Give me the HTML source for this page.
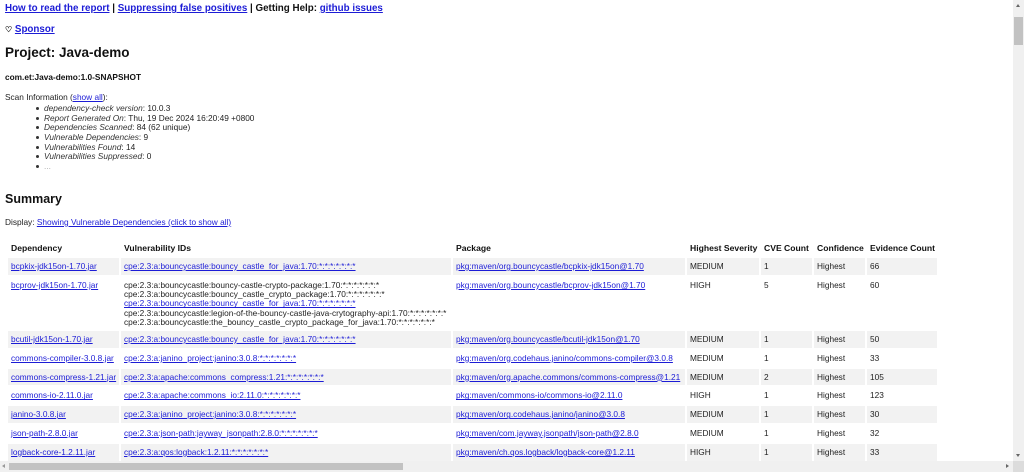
<!DOCTYPE html>
<html><head><meta charset="utf-8"><style>
html,body{margin:0;padding:0;background:#fff;width:1024px;height:472px;overflow:hidden;font-family:"Liberation Sans",Arial,sans-serif;color:#222}
a{color:#1c1cd6;text-decoration:underline}
.abs{position:absolute;white-space:nowrap}
.top{font-size:9.8px;font-weight:bold;color:#111}
ul{margin:0;padding:0;list-style:none}
li{position:absolute;left:44px;font-size:8.3px;white-space:nowrap}
li:before{content:"";position:absolute;left:-8px;top:4px;width:3px;height:3px;background:#333;border-radius:50%}
li i{color:#333}
table{position:absolute;left:6px;top:237px;border-collapse:separate;border-spacing:2px;font-size:8.3px;color:#222}
td,th{padding:0 0 0 3px;text-align:left;vertical-align:top;white-space:nowrap}
th{height:17px;vertical-align:middle;font-weight:bold;font-size:8.6px;color:#111}
td{height:16.85px;line-height:16.85px}
tr.o td{background:#f2f2f2}
td.m{line-height:9.3px;padding-top:4px;height:48px}
.vs{position:absolute;left:1013px;top:0;width:11px;height:461px;background:#f0f0f0}
.hs{position:absolute;left:0;top:461px;width:1013px;height:11px;background:#f0f0f0}
</style></head><body>
<div class="abs top" style="left:5px;top:3px"><a href="#">How to read the report</a> | <a href="#">Suppressing false positives</a> | Getting Help: <a href="#">github issues</a></div>
<div class="abs top" style="left:5px;top:24px"><span style="font-size:8px">♡</span> <a href="#">Sponsor</a></div>
<div class="abs" style="left:5px;top:45px;font-size:13.5px;font-weight:bold;color:#111">Project: Java-demo</div>
<div class="abs" style="left:5px;top:72px;font-size:8.3px;font-weight:bold;color:#111">com.et:Java-demo:1.0-SNAPSHOT</div>
<div class="abs" style="left:5px;top:92px;font-size:8.3px">Scan Information (<a href="#">show all</a>):</div>
<ul>
<li style="top:103px"><i>dependency-check version</i>: 10.0.3</li>
<li style="top:113px"><i>Report Generated On</i>: Thu, 19 Dec 2024 16:20:49 +0800</li>
<li style="top:122px"><i>Dependencies Scanned</i>: 84 (62 unique)</li>
<li style="top:132px"><i>Vulnerable Dependencies</i>: 9</li>
<li style="top:142px"><i>Vulnerabilities Found</i>: 14</li>
<li style="top:151px"><i>Vulnerabilities Suppressed</i>: 0</li>
<li style="top:161px;color:#aaa">...</li>
</ul>
<div class="abs" style="left:5px;top:192px;font-size:12.5px;font-weight:bold;color:#111">Summary</div>
<div class="abs" style="left:5px;top:217px;font-size:8.3px">Display: <a href="#">Showing Vulnerable Dependencies (click to show all)</a></div>
<table>
<tr><th style="width:108px">Dependency</th><th style="width:327px">Vulnerability IDs</th><th style="width:229px">Package</th><th style="width:69px">Highest Severity</th><th style="width:48px">CVE Count</th><th style="width:48px">Confidence</th><th style="width:67px">Evidence Count</th></tr>
<tr class="o"><td><a href="#">bcpkix-jdk15on-1.70.jar</a></td><td><a href="#">cpe:2.3:a:bouncycastle:bouncy_castle_for_java:1.70:*:*:*:*:*:*:*</a></td><td><a href="#">pkg:maven/org.bouncycastle/bcpkix-jdk15on@1.70</a></td><td>MEDIUM</td><td>1</td><td>Highest</td><td>66</td></tr>
<tr><td><a href="#">bcprov-jdk15on-1.70.jar</a></td><td class="m">cpe:2.3:a:bouncycastle:bouncy-castle-crypto-package:1.70:*:*:*:*:*:*:*<br>cpe:2.3:a:bouncycastle:bouncy_castle_crypto_package:1.70:*:*:*:*:*:*:*<br><a href="#">cpe:2.3:a:bouncycastle:bouncy_castle_for_java:1.70:*:*:*:*:*:*:*</a><br>cpe:2.3:a:bouncycastle:legion-of-the-bouncy-castle-java-crytography-api:1.70:*:*:*:*:*:*:*<br>cpe:2.3:a:bouncycastle:the_bouncy_castle_crypto_package_for_java:1.70:*:*:*:*:*:*:*</td><td><a href="#">pkg:maven/org.bouncycastle/bcprov-jdk15on@1.70</a></td><td>HIGH</td><td>5</td><td>Highest</td><td>60</td></tr>
<tr class="o"><td><a href="#">bcutil-jdk15on-1.70.jar</a></td><td><a href="#">cpe:2.3:a:bouncycastle:bouncy_castle_for_java:1.70:*:*:*:*:*:*:*</a></td><td><a href="#">pkg:maven/org.bouncycastle/bcutil-jdk15on@1.70</a></td><td>MEDIUM</td><td>1</td><td>Highest</td><td>50</td></tr>
<tr><td><a href="#">commons-compiler-3.0.8.jar</a></td><td><a href="#">cpe:2.3:a:janino_project:janino:3.0.8:*:*:*:*:*:*:*</a></td><td><a href="#">pkg:maven/org.codehaus.janino/commons-compiler@3.0.8</a></td><td>MEDIUM</td><td>1</td><td>Highest</td><td>33</td></tr>
<tr class="o"><td><a href="#">commons-compress-1.21.jar</a></td><td><a href="#">cpe:2.3:a:apache:commons_compress:1.21:*:*:*:*:*:*:*</a></td><td><a href="#">pkg:maven/org.apache.commons/commons-compress@1.21</a></td><td>MEDIUM</td><td>2</td><td>Highest</td><td>105</td></tr>
<tr><td><a href="#">commons-io-2.11.0.jar</a></td><td><a href="#">cpe:2.3:a:apache:commons_io:2.11.0:*:*:*:*:*:*:*</a></td><td><a href="#">pkg:maven/commons-io/commons-io@2.11.0</a></td><td>HIGH</td><td>1</td><td>Highest</td><td>123</td></tr>
<tr class="o"><td><a href="#">janino-3.0.8.jar</a></td><td><a href="#">cpe:2.3:a:janino_project:janino:3.0.8:*:*:*:*:*:*:*</a></td><td><a href="#">pkg:maven/org.codehaus.janino/janino@3.0.8</a></td><td>MEDIUM</td><td>1</td><td>Highest</td><td>30</td></tr>
<tr><td><a href="#">json-path-2.8.0.jar</a></td><td><a href="#">cpe:2.3:a:json-path:jayway_jsonpath:2.8.0:*:*:*:*:*:*:*</a></td><td><a href="#">pkg:maven/com.jayway.jsonpath/json-path@2.8.0</a></td><td>MEDIUM</td><td>1</td><td>Highest</td><td>32</td></tr>
<tr class="o"><td><a href="#">logback-core-1.2.11.jar</a></td><td><a href="#">cpe:2.3:a:qos:logback:1.2.11:*:*:*:*:*:*:*</a></td><td><a href="#">pkg:maven/ch.qos.logback/logback-core@1.2.11</a></td><td>HIGH</td><td>1</td><td>Highest</td><td>33</td></tr>
</table>
<div class="vs"><div style="position:absolute;left:1px;top:17px;width:9px;height:28px;background:#c2c2c2"></div>
<div style="position:absolute;left:3px;top:4px;border:2.5px solid transparent;border-bottom:3px solid #666;border-top:0"></div>
<div style="position:absolute;left:3px;top:454px;border:2.5px solid transparent;border-top:3px solid #666;border-bottom:0"></div></div>
<div class="hs"><div style="position:absolute;left:9px;top:2px;width:394px;height:7px;background:#c2c2c2"></div>
<div style="position:absolute;left:2px;top:3px;border:2.5px solid transparent;border-right:3px solid #999;border-left:0"></div>
<div style="position:absolute;left:1006px;top:3px;border:2.5px solid transparent;border-left:3px solid #666;border-right:0"></div></div>
<div style="position:absolute;left:1013px;top:461px;width:11px;height:11px;background:#dcdcdc"></div>
</body></html>
